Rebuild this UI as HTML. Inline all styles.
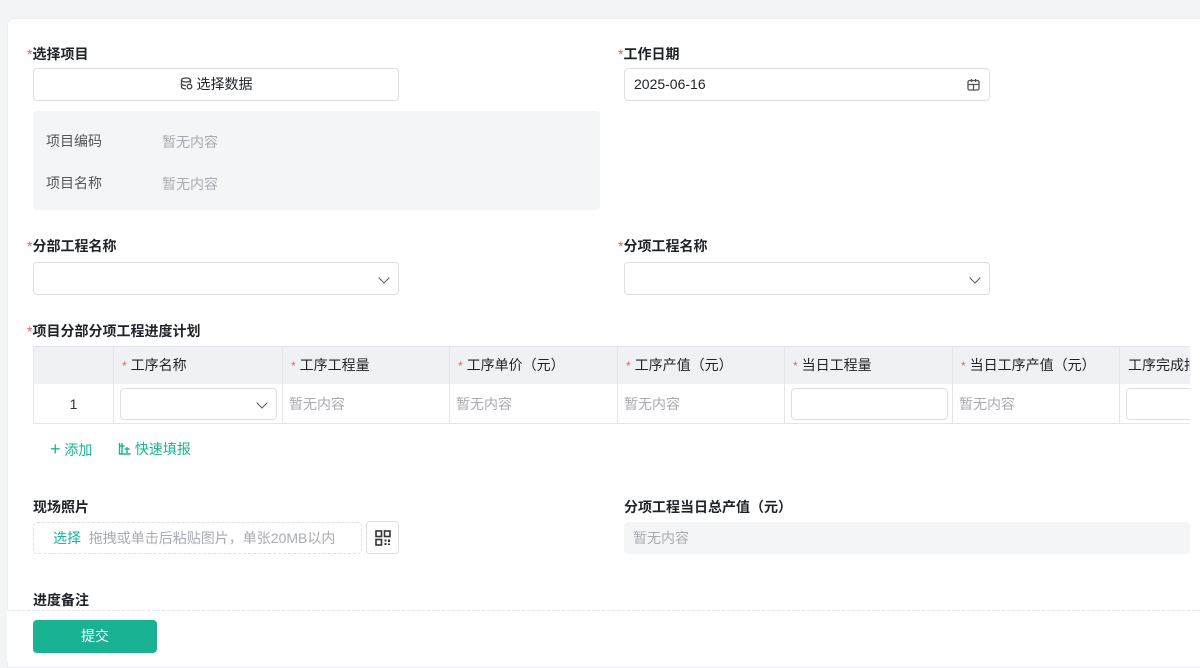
<!DOCTYPE html>
<html><head><meta charset="utf-8"><style>
*{box-sizing:border-box;margin:0;padding:0}
body{width:1200px;height:662px;overflow:hidden;background:#f3f4f6;font-family:"Liberation Sans","Noto Sans CJK SC",sans-serif;font-size:14px;color:#1f2329;position:relative}
.card{position:absolute;left:7px;top:18px;width:1200px;height:650px;background:#fff;border-radius:6px 0 0 0;border:1px solid #eceef1}
.a{position:absolute}
.lbl{font-weight:bold;font-size:14px;color:#1f2329;line-height:20px}
.lbl i{color:#f05a5a;font-style:normal;font-weight:normal}
.box{position:absolute;border:1px solid #dcdfe5;border-radius:4px;background:#fff}
.ph{color:#a8abb2}
.chev{position:absolute;right:10px;top:11px;width:8px;height:8px;border-right:1.5px solid #555;border-bottom:1.5px solid #555;transform:rotate(45deg)}
.th{position:absolute;top:0;height:37px;line-height:37px;padding-left:8px;border-left:1px solid #e4e6ea;white-space:nowrap;overflow:hidden}
.td{position:absolute;top:37px;height:40px;line-height:40px;padding-left:6px;border-left:1px solid #e4e6ea;color:#a8abb2;white-space:nowrap;overflow:hidden}
.th i{color:#f05a5a;font-style:normal;font-size:12px;margin-right:4px}
</style></head><body>
<div class="card"></div>
<div class="a lbl" style="left:27px;top:44px"><i>*</i>选择项目</div>
<div class="box" style="left:33px;top:68px;width:366px;height:33px;text-align:center;line-height:31px">
<svg width="13" height="13" viewBox="0 0 13 13" style="vertical-align:-1px;margin-right:4px"><ellipse cx="6" cy="3" rx="4.5" ry="2" fill="none" stroke="#444" stroke-width="1.3"/><path d="M1.5 3v7c0 1.1 2 2 4.5 2M10.5 3v3M1.5 6.5c0 1.1 2 2 4.5 2" fill="none" stroke="#444" stroke-width="1.3"/><circle cx="9.5" cy="9.5" r="2.3" fill="none" stroke="#444" stroke-width="1.3"/></svg>选择数据</div>
<div class="a" style="left:33px;top:111px;width:567px;height:99px;background:#f4f5f7;border-radius:4px"></div>
<div class="a" style="left:46px;top:131px;color:#555">项目编码</div>
<div class="a ph" style="left:162px;top:132px">暂无内容</div>
<div class="a" style="left:46px;top:173px;color:#555">项目名称</div>
<div class="a ph" style="left:162px;top:174px">暂无内容</div>

<div class="a lbl" style="left:618px;top:44px"><i>*</i>工作日期</div>
<div class="box" style="left:624px;top:68px;width:366px;height:33px;line-height:31px;padding-left:9px">2025-06-16
<svg class="a" style="right:9px;top:9px" width="13" height="13" viewBox="0 0 13 13"><rect x="1" y="2.5" width="11" height="9.5" rx="1.5" fill="none" stroke="#555" stroke-width="1.3"/><path d="M1 6.5h11M4.5 1v3M8.5 1v3M6.5 6.5v5.5" stroke="#555" stroke-width="1.3"/></svg></div>

<div class="a lbl" style="left:27px;top:236px"><i>*</i>分部工程名称</div>
<div class="box" style="left:33px;top:262px;width:366px;height:33px"><div class="chev"></div></div>
<div class="a lbl" style="left:618px;top:236px"><i>*</i>分项工程名称</div>
<div class="box" style="left:624px;top:262px;width:366px;height:33px"><div class="chev"></div></div>

<div class="a lbl" style="left:27px;top:321px"><i>*</i>项目分部分项工程进度计划</div>
<div class="a" style="left:33px;top:346px;width:1157px;height:78px;border:1px solid #e4e6ea;border-right:none;overflow:hidden">
<div class="a" style="left:0;top:0;width:1160px;height:37px;background:#f0f1f4"></div>
<div class="a" style="left:0;top:76px;width:1160px;height:1px;background:#e4e6ea"></div>
<div class="th" style="left:79px;width:169px"><i>*</i>工序名称</div>
<div class="th" style="left:248px;width:167px"><i>*</i>工序工程量</div>
<div class="th" style="left:415px;width:168px"><i>*</i>工序单价（元）</div>
<div class="th" style="left:583px;width:167px"><i>*</i>工序产值（元）</div>
<div class="th" style="left:750px;width:168px"><i>*</i>当日工程量</div>
<div class="th" style="left:918px;width:167px"><i>*</i>当日工序产值（元）</div>
<div class="th" style="left:1085px;width:100px">工序完成拍照</div>
<div class="td" style="left:0;width:79px;border:none;color:#333;text-align:center;padding:0">1</div>
<div class="td" style="left:79px;width:169px"><div class="box" style="left:6px;top:4px;width:157px;height:32px"><div class="chev" style="top:10px"></div></div></div>
<div class="td" style="left:248px;width:167px">暂无内容</div>
<div class="td" style="left:415px;width:168px">暂无内容</div>
<div class="td" style="left:583px;width:167px">暂无内容</div>
<div class="td" style="left:750px;width:168px"><div class="box" style="left:6px;top:4px;width:157px;height:32px"></div></div>
<div class="td" style="left:918px;width:167px">暂无内容</div>
<div class="td" style="left:1085px;width:100px"><div class="box" style="left:6px;top:4px;width:157px;height:32px"></div></div>
</div>
<div class="a" style="left:50px;top:439px;color:#19b394;font-size:14px;line-height:20px"><span style="font-size:18px">+</span> 添加</div>
<div class="a" style="left:118px;top:439px;color:#19b394;font-size:14px;line-height:20px">
<svg width="13" height="13" viewBox="0 0 13 13" style="vertical-align:-1px"><path d="M1.5 1v11h11M1.5 4h5M4 1v11M6.5 7h5M9 5v6" fill="none" stroke="#19b394" stroke-width="1.4"/></svg> 快速填报</div>

<div class="a lbl" style="left:33px;top:497px">现场照片</div>
<div class="a" style="left:33px;top:522px;width:329px;height:32px;border:1px dashed #dcdfe5;border-radius:4px;line-height:30px;padding-left:19px"><span style="color:#19b394">选择</span> <span class="ph">&nbsp;拖拽或单击后粘贴图片，单张20MB以内</span></div>
<div class="box" style="left:366px;top:521px;width:33px;height:33px">
<svg class="a" style="left:8px;top:8px" width="16" height="16" viewBox="0 0 16 16"><g fill="none" stroke="#333" stroke-width="1.6"><rect x="1" y="1" width="5.5" height="5.5"/><rect x="9.5" y="1" width="5.5" height="5.5"/><rect x="1" y="9.5" width="5.5" height="5.5"/></g><path d="M9.5 9.5h2v2h-2zM13 9.5h2v2.5h-2zM9.5 13h2v2h-2zM13 13.5h2v1.5h-2z" fill="#333"/></svg></div>

<div class="a lbl" style="left:624px;top:497px">分项工程当日总产值（元）</div>
<div class="a ph" style="left:624px;top:522px;width:566px;height:32px;background:#f4f5f7;border-radius:4px;line-height:32px;padding-left:9px">暂无内容</div>

<div class="a lbl" style="left:33px;top:590px">进度备注</div>
<div class="a" style="left:7px;top:610px;width:1193px;border-top:1px dashed #e4e6ea;height:52px;background:#fff"></div>
<div class="a" style="left:33px;top:620px;width:124px;height:33px;background:#19b394;border-radius:4px;color:#fff;text-align:center;line-height:33px">提交</div>
</body></html>
